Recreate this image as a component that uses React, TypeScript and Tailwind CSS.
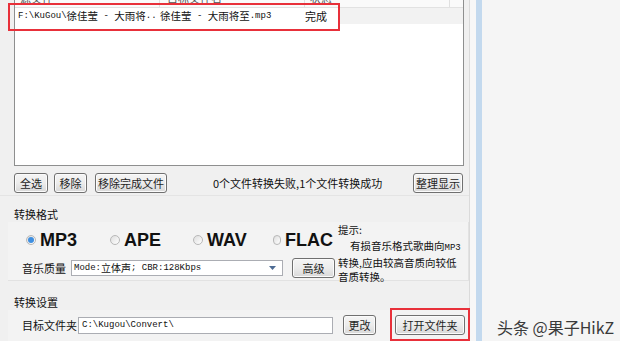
import clsx from 'clsx'
import type { ReactNode } from 'react'

const cjk = "font-['Noto_Sans_CJK_SC',sans-serif]"
const mono = "font-['Liberation_Mono','Noto_Sans_CJK_SC',monospace] text-[9px]"

function Btn({ w, children }: { w: string; children: ReactNode }) {
  return (
    <div
      className={clsx(
        'flex h-[20px] shrink-0 items-center justify-center rounded-[3px] border border-[#707070] bg-linear-to-b from-[#f5f5f5] via-[#ececec] to-[#d8d8d8] text-[11px] text-[#1e1e1e] shadow-[inset_0_0_0_1px_#fbfbfb]',
        w
      )}
    >
      {children}
    </div>
  )
}

function Radio({ checked, label, w }: { checked?: boolean; label: string; w: string }) {
  return (
    <div className={clsx('flex items-center', w)}>
      <span className="flex h-[10px] w-[10px] items-center justify-center rounded-full border border-[#b8b8b8] bg-linear-to-br from-[#dedede] to-white">
        {checked && <span className="h-[6px] w-[6px] rounded-full bg-[#3f8fe0]" />}
      </span>
      <span className="ml-[4px] font-['Liberation_Sans',sans-serif] text-[18px] font-bold leading-[18px] text-[#111]">{label}</span>
    </div>
  )
}

export default function App() {
  return (
    <div className={clsx('relative flex h-[345px] w-[628px] overflow-hidden bg-white text-[11px] leading-none text-[#111]', cjk)}>
      {/* converter window */}
      <div className="flex h-[341px] w-[470px] flex-col border-r border-[#dadada] bg-[#f0f0f0]">
        {/* file list */}
        <div className="ml-[14px] h-[166px] w-[450px] border-x border-b border-[#8e8f8f] bg-white">
          <div className="flex h-[8px] overflow-hidden border-b border-[#e2e2e2] bg-[#fafafa] text-[#555]">
            <div className="-mt-[7px] w-[145px] border-r border-[#e0e0e0] pl-[5px]">源文件</div>
            <div className="-mt-[7px] w-[145px] border-r border-[#e0e0e0] pl-[7px]">目标文件名</div>
            <div className="-mt-[7px] w-[145px] border-r border-[#e0e0e0] pl-[5px]">状态</div>
          </div>
          <div className="flex h-[16px] items-center bg-[#f2f2f2] text-[10.5px]">
            <div className="flex h-full w-[325px] items-center bg-white">
              <div className="flex w-[145px] items-center pl-[3px] whitespace-nowrap">
                <span className={mono}>F:\KuGou\</span>
                <span>徐佳莹</span>
                <span className={mono}>&nbsp;-&nbsp;</span>
                <span>大雨将</span>
                <span className={mono}>..</span>
              </div>
              <div className="flex w-[145px] items-center whitespace-nowrap">
                <span>徐佳莹</span>
                <span className={mono}>&nbsp;-&nbsp;</span>
                <span>大雨将至</span>
                <span className={mono}>.mp3</span>
              </div>
              <div className="text-[11px]">完成</div>
            </div>
          </div>
        </div>

        {/* list actions */}
        <div className="mt-[7px] flex h-[20px] items-center pl-[14px] pr-[6px]">
          <Btn w="w-[34px]">全选</Btn>
          <div className="ml-[6px]">
            <Btn w="w-[33px]">移除</Btn>
          </div>
          <div className="ml-[8px]">
            <Btn w="w-[72px]">移除完成文件</Btn>
          </div>
          <span className="ml-[46px]">0个文件转换失败,1个文件转换成功</span>
          <div className="ml-auto">
            <Btn w="w-[50px]">整理显示</Btn>
          </div>
        </div>
        <div className="mt-[2px] border-b border-[#e4e4e4]" />

        {/* format */}
        <div className="mt-[10px] h-[16px] pl-[14px] leading-[16px]">转换格式</div>
        <div className="ml-[8px] flex h-[59px] w-[461px] border-r border-b border-[#e2e2e2] bg-[#f3f3f3]">
          <div className="flex w-[330px] shrink-0 flex-col">
            <div className="mt-[9px] flex h-[18px] items-center pl-[18px]">
              <Radio checked label="MP3" w="w-[84px]" />
              <Radio label="APE" w="w-[83px]" />
              <Radio label="WAV" w="w-[80px]" />
              <Radio label="FLAC" w="w-[60px]" />
            </div>
            <div className="mt-[9px] flex h-[20px] items-center pl-[14px]">
              <span className="w-[49px]">音乐质量</span>
              <div className="flex h-[16px] w-[212px] items-center border border-[#abadb3] bg-white pl-[2px] pr-[6px] whitespace-nowrap">
                <span className={mono}>Mode:</span>
                <span className="text-[10px]">立体声</span>
                <span className={mono}>; CBR:128Kbps</span>
                <svg className="ml-auto" width="7" height="4" viewBox="0 0 7 4">
                  <path d="M0 0h7L3.5 4z" fill="#4d6b94" />
                </svg>
              </div>
              <div className="ml-[9px]">
                <Btn w="w-[43px]">高级</Btn>
              </div>
            </div>
          </div>
          <div className="flex flex-col text-[10.5px] whitespace-nowrap">
            <div className="h-[15px] leading-[15px]">提示:</div>
            <div className="mt-[2px] leading-[14.5px]">
              <div className="pl-[12px]">
                有损音乐格式歌曲向<span className={mono}>MP3</span>
              </div>
              <div>转换,应由较高音质向较低</div>
              <div>音质转换。</div>
            </div>
          </div>
        </div>

        {/* settings */}
        <div className="mt-[13px] h-[16px] pl-[14px] leading-[16px]">转换设置</div>
        <div className="ml-[8px] flex h-[31px] w-[461px] items-start bg-[#f3f3f3] pt-[5px]">
          <div className="flex h-[20px] items-center pl-[14px]">
            <span className="w-[56px]">目标文件夹</span>
            <div className="flex h-[17px] w-[255px] items-center border border-[#abadb3] bg-white pl-[3px]">
              <span className={mono}>C:\Kugou\Convert\</span>
            </div>
            <div className="ml-[10px]">
              <Btn w="w-[33px]">更改</Btn>
            </div>
            <div className="ml-[19px]">
              <Btn w="w-[70px]">打开文件夹</Btn>
            </div>
          </div>
        </div>
      </div>
      <div className="h-[341px] w-[6px] bg-[#f7f7f7]" />
      <div className="h-[341px] w-[6px] bg-[#c3d9ee]" />
      <div className="flex h-[341px] w-[138px] flex-col justify-end bg-[#f5f5f5] pb-[5px] pl-[15px]">
        <span className="text-[16px] leading-[18px] text-[#3a3a3a]">头条 @果子HikZ</span>
      </div>

      {/* annotation boxes */}
      <div className="absolute left-[8px] top-[3px] h-[28px] w-[332px] border-2 border-[#e8303a]" />
      <div className="absolute left-[390px] top-[308px] h-[33px] w-[80px] border-2 border-[#e8303a]" />
    </div>
  )
}
